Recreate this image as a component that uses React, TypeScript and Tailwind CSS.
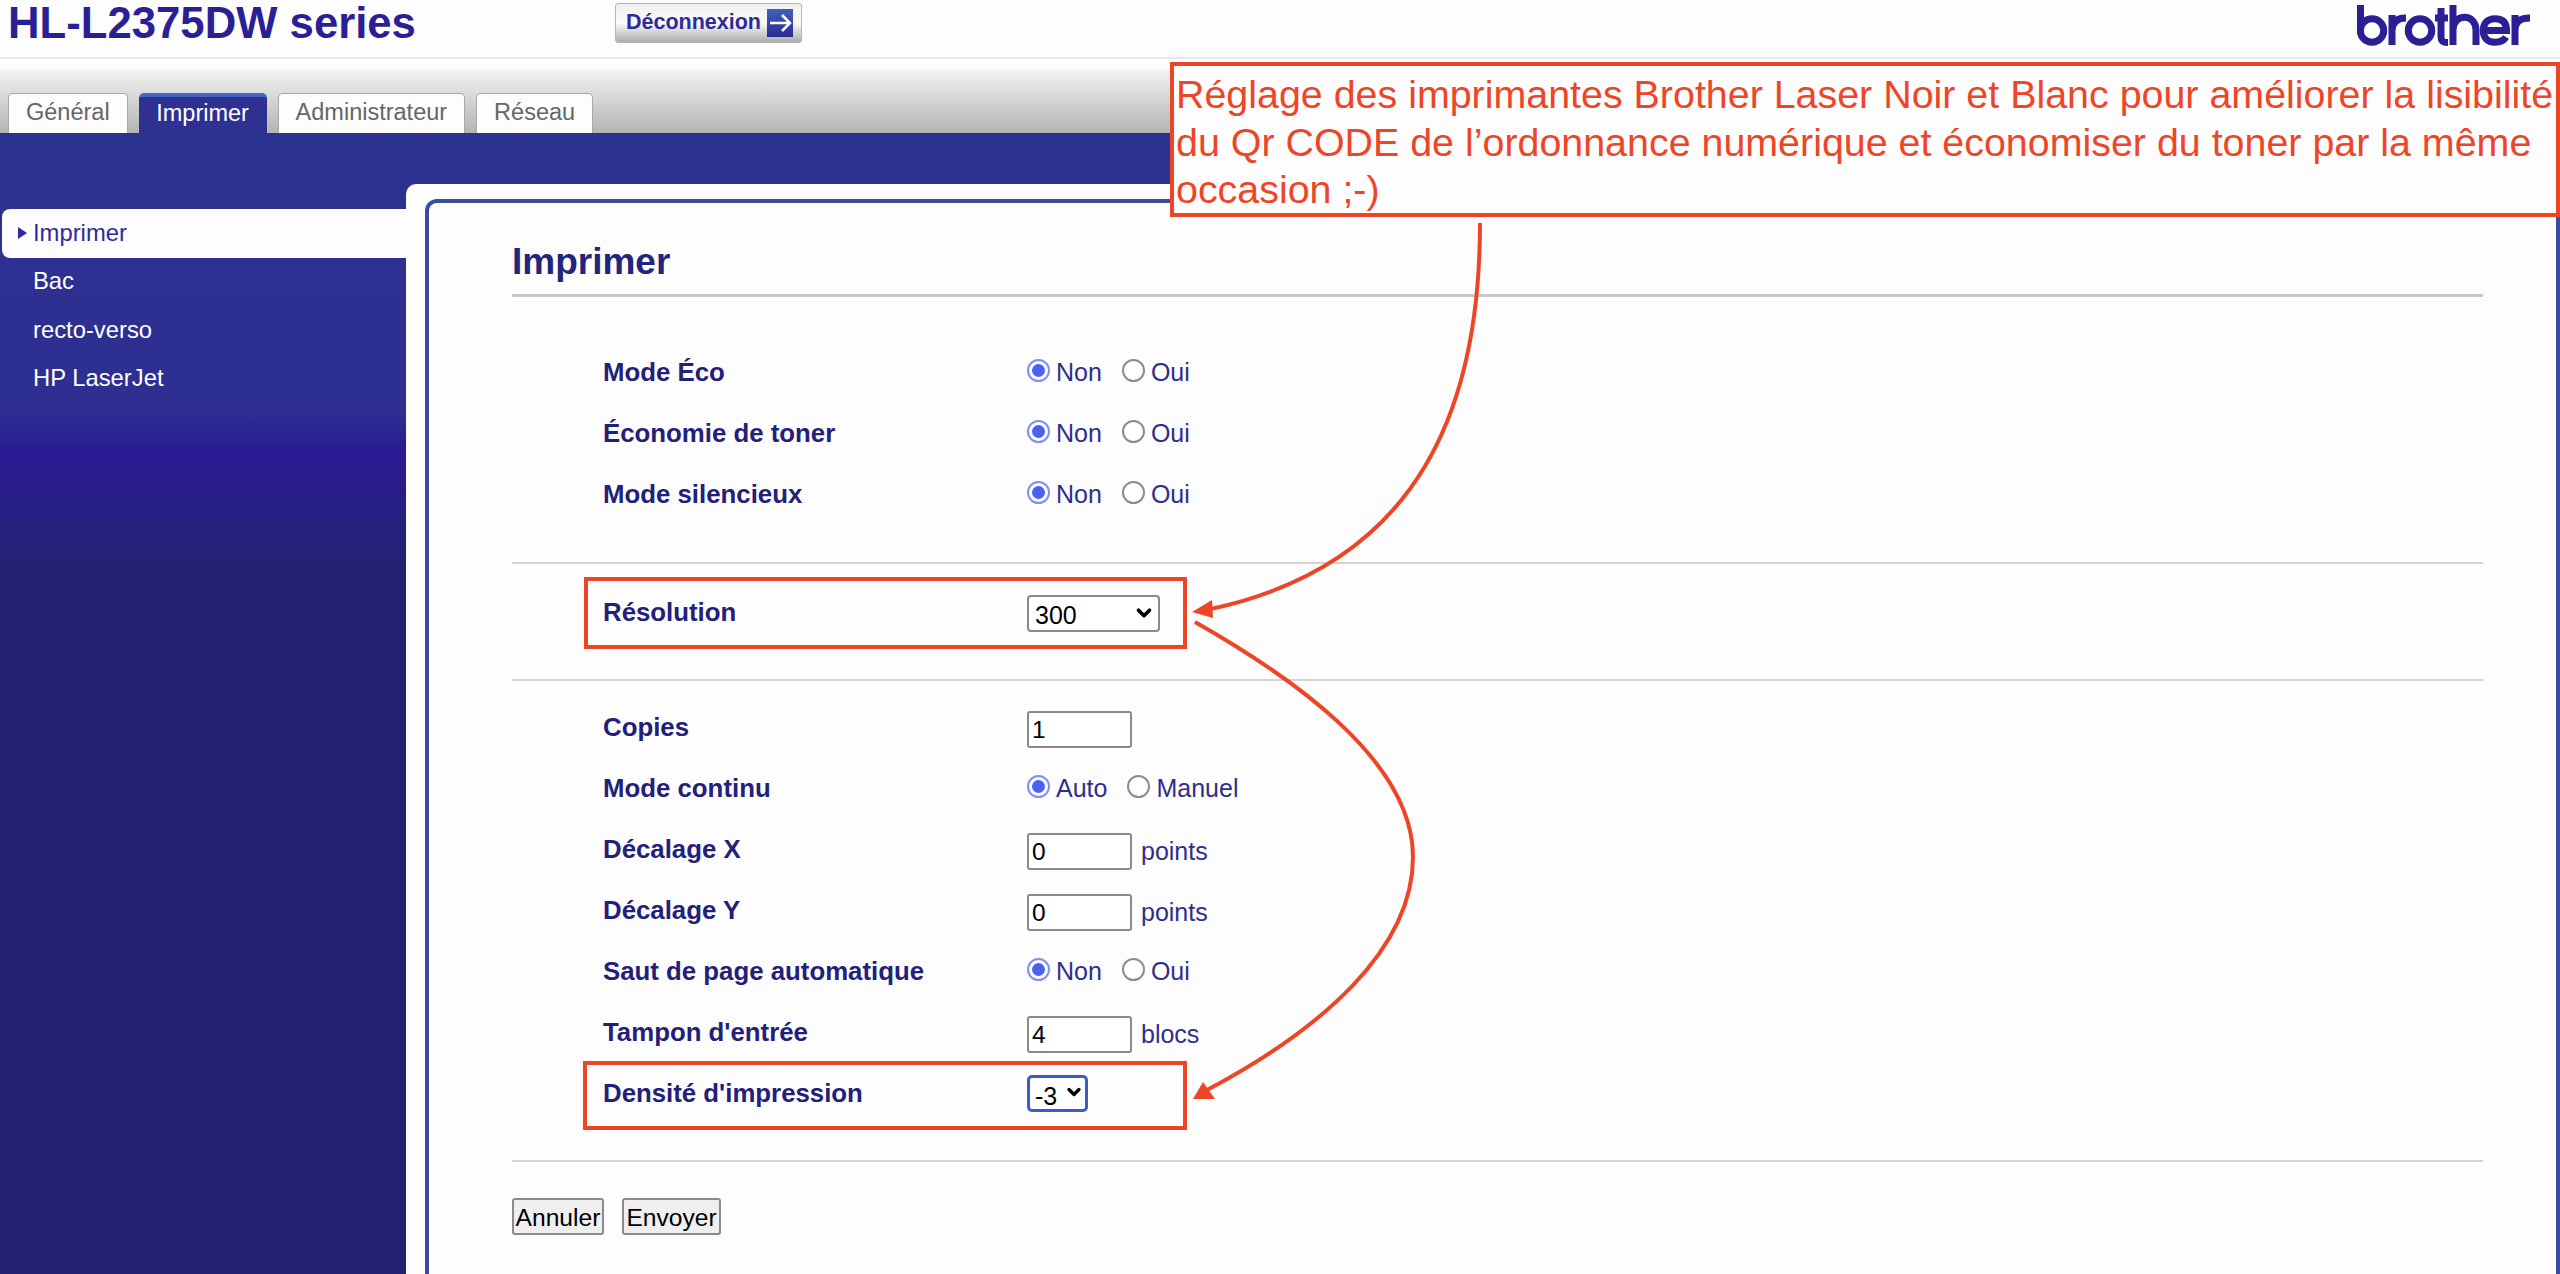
import React from 'react'
import { ChevronDown } from 'lucide-react'

const Logo: React.FC = () => (
  <svg width="174" height="41" viewBox="0 0 174 41" fill="none" stroke="#2b1f95" strokeWidth="7" className="mr-[29px] mt-[5px]">
    <path d="M3.500 0V26" />
    <circle cx="15" cy="25.500" r="11.750" />
    <path d="M35 40V10M35 26C35 17 40 13 49 13" />
    <circle cx="63" cy="25.500" r="11.750" />
    <path d="M84 3V32C84 36 86 37.500 91 37.500M78 13H91" />
    <path d="M96 0V40M96 25C96 8 119 8 119 25V40" />
    <path d="M127 25.500H149.500C149.500 17 145 13.750 138 13.750C130 13.750 126.250 19 126.250 25.500C126.250 32 130 37.250 138 37.250C143 37.250 147 35.500 149 32" />
    <path d="M158 40V10M158 26C158 17 163 13 173 13" />
  </svg>
)

const Header: React.FC = () => (
  <div className="flex h-[57px] items-start bg-[#fdfdfd] pl-2">
    <h1 className="w-[607px] text-[43.7px] leading-[46px] font-bold text-[#2b1f95]">HL-L2375DW series</h1>
    <button className="mt-[3px] flex h-10 w-[187px] items-center gap-[6px] rounded-[3px] border border-[#b5b5b5] bg-gradient-to-b from-[#f0f0f0] via-[#fafafa] to-[#adadad] pl-[10px]">
      <span className="text-[21.5px] leading-none font-bold text-[#2e2a9a]">Déconnexion</span>
      <svg width="26" height="28" viewBox="0 0 26 28">
        <defs>
          <linearGradient id="logout" x1="0" y1="0" x2="0" y2="1">
            <stop offset="0" stopColor="#3f63b8" />
            <stop offset="1" stopColor="#2b2a92" />
          </linearGradient>
        </defs>
        <rect width="26" height="28" fill="url(#logout)" />
        <path d="M3 14H22M15 6L23 14L15 22" fill="none" stroke="#fff" strokeWidth="2.500" />
      </svg>
    </button>
    <div className="ml-auto">
      <Logo />
    </div>
  </div>
)

const tabs = ['Général', 'Imprimer', 'Administrateur', 'Réseau']

const TabBar: React.FC = () => (
  <div className="h-[76px] border-t-2 border-[#e8e8e8] bg-gradient-to-b from-[#fdfdfd] from-[10px] via-[#f2f2f2] via-[12px] to-[#b4b4b4]">
    <div className="flex h-full items-end gap-[11px] pl-2">
      {tabs.map((tab) =>
        tab === 'Imprimer' ? (
          <div key={tab} className="flex h-10 w-[128px] items-center justify-center rounded-t-[5px] border-t-[4px] border-[#4766c4] bg-[#2e3192] pb-[2px] text-[23.5px] text-white">
            {tab}
          </div>
        ) : (
          <div key={tab} className="flex h-10 items-center rounded-t-[5px] border border-b-0 border-[#a8a8a8] bg-[#fdfdfd] px-[17px] pb-[2px] text-[23.5px] text-[#666666]">
            {tab}
          </div>
        ),
      )}
    </div>
  </div>
)

const Sidebar: React.FC = () => (
  <div className="w-[406px] shrink-0 pt-[76px] text-[23.8px]">
    <div className="ml-[2px] flex h-[49px] items-center gap-[6px] rounded-l-[8px] bg-[#fdfdfd] pb-[2px] pl-4 text-[#2e2a9a]">
      <span className="h-0 w-0 border-y-[6px] border-l-[9px] border-y-transparent border-l-[#2e2a9a]" />
      Imprimer
    </div>
    <div className="flex h-[48px] items-center pb-[2px] pl-[33px] text-white">Bac</div>
    <div className="flex h-[48px] items-center pl-[33px] text-white">recto-verso</div>
    <div className="flex h-[48px] items-center pl-[33px] text-white">HP LaserJet</div>
  </div>
)

const Radio: React.FC<{ checked?: boolean; label: string }> = ({ checked, label }) => (
  <label className="flex items-center gap-[6px]">
    {checked ? (
      <span className="-mt-1 flex h-[23px] w-[23px] items-center justify-center rounded-full border-2 border-[#7f8ff5] bg-white">
        <span className="h-[13px] w-[13px] rounded-full bg-[#4a62f0]" />
      </span>
    ) : (
      <span className="-mt-1 h-[23px] w-[23px] rounded-full border-2 border-[#8c8c8c] bg-white" />
    )}
    {label}
  </label>
)

const Radios: React.FC<{ first?: string; second?: string }> = ({ first = 'Non', second = 'Oui' }) => (
  <div className="flex gap-[20px]">
    <Radio checked label={first} />
    <Radio label={second} />
  </div>
)

const NumberField: React.FC<{ value: string; unit?: string }> = ({ value, unit }) => (
  <div className="flex items-center">
    <input
      defaultValue={value}
      className="mt-1 h-[37px] w-[105px] rounded-[3px] border-2 border-[#8a8a8a] bg-white pl-[3px] text-[24.5px] text-black"
    />
    {unit && <span className="ml-[9px] mt-1">{unit}</span>}
  </div>
)

const Row: React.FC<{ label: string; children: React.ReactNode }> = ({ label, children }) => (
  <div className="flex h-[61px] items-center">
    <div className="w-[515px] pl-[91px] text-[25.8px] font-bold text-[#23207a]">{label}</div>
    {children}
  </div>
)

const Rule: React.FC<{ className: string }> = ({ className }) => <div className={`h-[2px] bg-[#d4d4d4] ${className}`} />

const Form: React.FC = () => (
  <div className="ml-[83px] w-[1971px] text-[25px] text-[#2e2f8a]">
    <h2 className="h-[94px] border-b-[3px] border-[#c9c9c9] pt-[37px] text-[37px] leading-[44px] font-bold text-[#24247c]">Imprimer</h2>
    <div className="mt-[45px]">
      <Row label="Mode Éco"><Radios /></Row>
      <Row label="Économie de toner"><Radios /></Row>
      <Row label="Mode silencieux"><Radios /></Row>
    </div>
    <Rule className="mt-[37px] mb-[18px]" />
    <Row label="Résolution">
      <div className="relative mt-1 text-black">
        <select defaultValue="300" className="h-[37px] w-[133px] appearance-none rounded-[4px] border-2 border-[#8a8a8a] bg-white pl-[6px] text-[25px]">
          <option>300</option>
          <option>600</option>
        </select>
        <ChevronDown size={22} strokeWidth={4} className="pointer-events-none absolute top-[7px] right-[5px]" />
      </div>
    </Row>
    <Rule className="mt-[36px] mb-[16px]" />
    <Row label="Copies"><NumberField value="1" /></Row>
    <Row label="Mode continu"><Radios first="Auto" second="Manuel" /></Row>
    <Row label="Décalage X"><NumberField value="0" unit="points" /></Row>
    <Row label="Décalage Y"><NumberField value="0" unit="points" /></Row>
    <Row label="Saut de page automatique"><Radios /></Row>
    <Row label="Tampon d'entrée"><NumberField value="4" unit="blocs" /></Row>
    <Row label="Densité d'impression">
      <div className="relative mt-1 text-black">
        <select defaultValue="-3" className="h-[37px] w-[61px] appearance-none rounded-[5px] border-[3px] border-[#3a5bd0] bg-white pl-[5px] text-[25px]">
          <option>-3</option>
          <option>0</option>
        </select>
        <ChevronDown size={20} strokeWidth={4} className="pointer-events-none absolute top-[7px] right-[4px]" />
      </div>
    </Row>
    <Rule className="mt-[36px]" />
    <div className="mt-[36px] flex gap-[18px] text-[24.6px] text-black">
      <button className="h-[37px] w-[92px] rounded-[3px] border-2 border-[#8a8a8a] bg-[#efefef]">Annuler</button>
      <button className="h-[37px] w-[99px] rounded-[3px] border-2 border-[#8a8a8a] bg-[#efefef]">Envoyer</button>
    </div>
  </div>
)

const Annotations: React.FC = () => (
  <>
    <div className="absolute top-[62px] left-[1170px] h-[155px] w-[1390px] border-4 border-[#ef4527] bg-[#fdfdfd] pt-[5px] pl-[2px] text-[39.4px] leading-[47.500px] whitespace-nowrap text-[#ef4527]">
      <div>Réglage des imprimantes Brother Laser Noir et Blanc pour améliorer la lisibilité</div>
      <div>du Qr CODE de l’ordonnance numérique et économiser du toner par la même</div>
      <div>occasion ;-)</div>
    </div>
    <div className="absolute top-[577px] left-[584px] h-[72px] w-[603px] border-4 border-[#ef4527]" />
    <div className="absolute top-[1061px] left-[583px] h-[69px] w-[604px] border-4 border-[#ef4527]" />
    <svg width="2560" height="1274" className="pointer-events-none absolute top-0 left-0" fill="none" stroke="#ef4527" strokeWidth="4">
      <path d="M1480 223C1480 400 1425 565 1206 610" />
      <path d="M1192 612L1212 600L1213 618Z" fill="#ef4527" stroke="none" />
      <path d="M1195 622C1290 676 1413 760 1413 857C1413 950 1320 1030 1207 1090" />
      <path d="M1193 1099L1203 1082L1215 1099Z" fill="#ef4527" stroke="none" />
    </svg>
  </>
)

export default function App() {
  return (
    <div className="relative h-[1274px] w-[2560px] overflow-hidden bg-[#fdfdfd] font-['Liberation_Sans',sans-serif]">
      <Header />
      <TabBar />
      <div className="flex h-[1141px] bg-[linear-gradient(to_bottom,#2c3290_0px,#2e2f90_281px,#2a1a94_318px,#281d88_357px,#232272_427px,#232272_100%)]">
        <Sidebar />
        <div className="mt-[51px] flex-1 rounded-tl-[10px] bg-[#fdfdfd] pt-[15px] pl-[19px]">
          <div className="h-full rounded-tl-[12px] border-t-4 border-r-4 border-l-4 border-[#3a4d9f]">
            <Form />
          </div>
        </div>
      </div>
      <Annotations />
    </div>
  )
}
